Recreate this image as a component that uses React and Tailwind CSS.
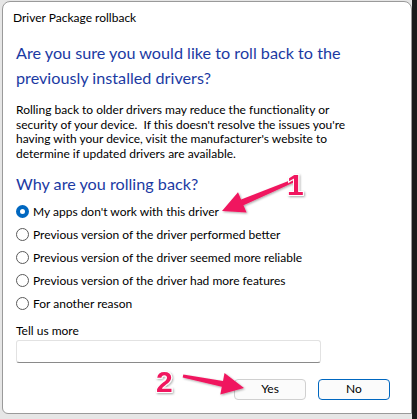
// App.jsx
const reasons = [
  "My apps don't work with this driver",
  "Previous version of the driver performed better",
  "Previous version of the driver seemed more reliable",
  "Previous version of the driver had more features",
  "For another reason",
]

function Radio({ checked }) {
  return checked ? (
    <span className="w-[13px] h-[13px] rounded-full border-[4px] border-[#0067c0] bg-white shrink-0" />
  ) : (
    <span className="w-[13px] h-[13px] rounded-full border border-[#5a5a5a] bg-white shrink-0" />
  )
}

function Annotations() {
  return (
    <svg className="absolute inset-0 pointer-events-none" width="417" height="419">
      <defs>
        <filter id="sh" x="-20%" y="-20%" width="140%" height="140%">
          <feDropShadow dx="1" dy="1" stdDeviation="1" floodColor="#000" floodOpacity="0.35" />
        </filter>
      </defs>
      <g filter="url(#sh)">
        <path d="M292.4 179.6 L241.1 199.6 L238 192.3 L222 211 L246.6 212.5 L243.5 205.2 L293.6 182.4 Z" fill="#f0195f" />
        <path d="M183.3 374.5 L223 380.9 L224.5 373 L244 388 L220.3 394.6 L221.8 386.7 L182.7 377.5 Z" fill="#f0195f" />
        <text x="287" y="195" fontSize="30" fontWeight="800" fill="#f0195f" stroke="#fff" strokeWidth="2" paintOrder="stroke" fontFamily="'Liberation Sans', Arial, sans-serif">1</text>
        <text x="156" y="392" fontSize="30" fontWeight="800" fill="#f0195f" stroke="#fff" strokeWidth="2" paintOrder="stroke" fontFamily="'Liberation Sans', Arial, sans-serif">2</text>
      </g>
    </svg>
  )
}

export default function App() {
  return (
    <div className="relative w-[417px] h-[419px] flex bg-[#cfcfcf] overflow-hidden" style={{ fontFamily: "Lato, 'Noto Sans', sans-serif" }}>
      <div className="w-[412px] flex flex-col bg-[#e6e6e6]">
        <div className="h-[413px] mt-[1px] ml-[2px] bg-white border border-[#9a9a9a] rounded-t-[8px] rounded-bl-[6px] flex flex-col text-[12px] text-black">
          <div className="h-[32px] flex items-center px-[10px] text-[12px] text-black">Driver Package rollback</div>
          <div className="px-[13px] pt-[6px]">
            <h1 className="text-[16.2px] leading-[25px] text-[#1b3aa3] pr-[40px]">
              Are you sure you would like to roll back to the previously installed drivers?
            </h1>
            <p className="mt-[13px] leading-[14.7px] text-[12px] pr-[30px]">
              Rolling back to older drivers may reduce the functionality or security of your device.&nbsp; If this doesn't resolve the issues you're having with your device, visit the manufacturer's website to determine if updated drivers are available.
            </p>
            <h2 className="mt-[10px] text-[16.2px] leading-[24px] text-[#1b3aa3]">Why are you rolling back?</h2>
            <div className="mt-[8px] flex flex-col gap-[7px]">
              {reasons.map((r, i) => (
                <label key={r} className="flex items-center gap-[4px] h-[16px] leading-[16px]">
                  <Radio checked={i === 0} />
                  <span>{r}</span>
                </label>
              ))}
            </div>
            <div className="mt-[11px] leading-[15px]">Tell us more</div>
            <div className="mt-[2px] w-[305px] h-[23px] border border-[#e2e2e2] border-b-[#8a8a8a] rounded-[3px] bg-white" />
            <div className="mt-[16px] flex justify-end gap-[12px] pr-[8px]">
              <button className="w-[72px] h-[21px] rounded-[4px] border border-[#d0d0d0] bg-[#fbfbfb] text-[12px]">Yes</button>
              <button className="w-[72px] h-[21px] rounded-[4px] border border-[#0067c0] bg-[#fbfbfb] text-[12px]">No</button>
            </div>
          </div>
        </div>
      </div>
      <div className="flex-1 bg-[#1b1b1b]" />
      <Annotations />
    </div>
  )
}
